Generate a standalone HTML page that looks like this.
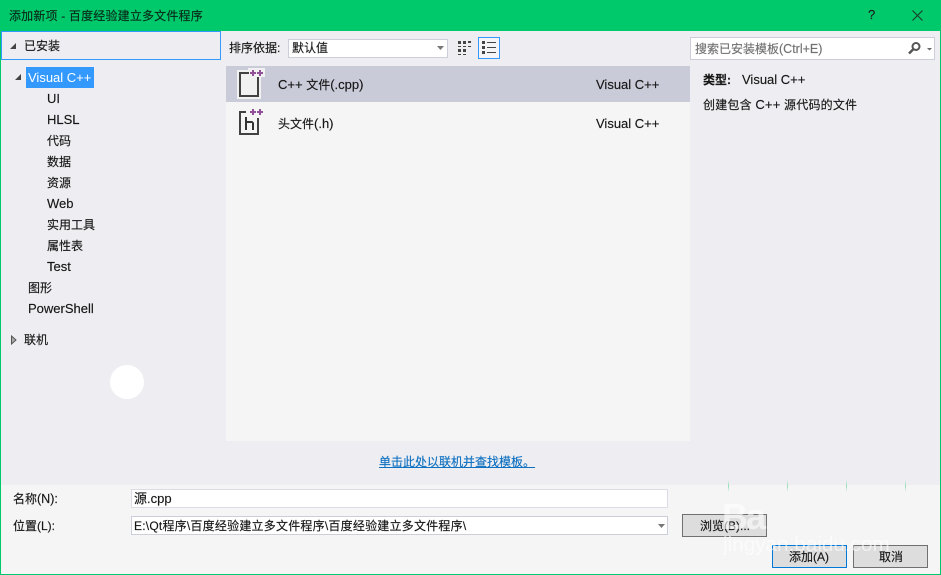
<!DOCTYPE html>
<html><head><meta charset="utf-8"><style>
html,body{margin:0;padding:0}
body{width:941px;height:575px;overflow:hidden;position:relative;background:#eeeef2;font-family:"Liberation Sans","Noto Sans CJK SC",sans-serif;font-size:12px;color:#161616;-webkit-text-stroke:.15px}
.a{position:absolute;box-sizing:border-box}
.t{position:absolute;white-space:nowrap;line-height:16px;height:16px}
.s{font-size:13px}
.k{position:absolute;width:1px;height:12px;top:480px;background:linear-gradient(#fff0,#8fdcb8 50%,#fff0)}
</style></head><body>
<div class="a" style="left:0;top:0;width:941px;height:575px;border:1px solid #00c96b;border-top:0"></div>
<div class="a" style="left:0;top:0;width:941px;height:31px;background:#00c96b"></div>
<div class="t" style="left:9px;top:8px;color:#0a2a1a;letter-spacing:.18px">添加新项 - 百度经验建立多文件程序</div>
<div class="t" style="left:868px;top:7px;color:#1e1e1e;font-size:13px">?</div>
<svg class="a" style="left:911px;top:9px" width="13" height="13"><path d="M1.500 1.500L11.500 11.500M11.500 1.500L1.500 11.500" stroke="#1e3a2a" stroke-width="1.100" fill="none"/></svg>

<div class="a" style="left:1px;top:31px;width:220px;height:29px;border:1px solid #3399ff;background:#eeeef2"></div>
<svg class="a" style="left:9px;top:42px" width="8" height="8"><path d="M7 1V7H1Z" fill="#444"/></svg>
<div class="t" style="left:24px;top:38px">已安装</div>
<svg class="a" style="left:14px;top:73px" width="8" height="8"><path d="M7 1V7H1Z" fill="#444"/></svg>
<div class="a" style="left:26px;top:67px;width:68px;height:21px;background:#3399ff"></div>
<div class="t s" style="left:28px;top:70px;color:#fff;-webkit-text-stroke:0">Visual C++</div>
<div class="t s" style="left:47px;top:91px">UI</div>
<div class="t s" style="left:47px;top:112px">HLSL</div>
<div class="t" style="left:47px;top:133px">代码</div>
<div class="t" style="left:47px;top:154px">数据</div>
<div class="t" style="left:47px;top:175px">资源</div>
<div class="t s" style="left:47px;top:196px">Web</div>
<div class="t" style="left:47px;top:217px">实用工具</div>
<div class="t" style="left:47px;top:238px">属性表</div>
<div class="t s" style="left:47px;top:259px">Test</div>
<div class="t" style="left:28px;top:280px">图形</div>
<div class="t s" style="left:28px;top:301px">PowerShell</div>
<svg class="a" style="left:10px;top:335px" width="8" height="10"><path d="M1.500 1L6 5L1.500 9Z" fill="#aaa" stroke="#555"/></svg>
<div class="t" style="left:24px;top:332px">联机</div>
<div class="a" style="left:110px;top:365px;width:34px;height:34px;border-radius:50%;background:#fff"></div>

<div class="t" style="left:229px;top:40px">排序依据:</div>
<div class="a" style="left:288px;top:39px;width:160px;height:19px;background:#fff;border:1px solid #ccced9"></div>
<div class="t" style="left:292px;top:40px">默认值</div>
<svg class="a" style="left:437px;top:46px" width="8" height="5"><path d="M0 0H7L3.500 4Z" fill="#777"/></svg>
<svg class="a" style="left:458px;top:41px" width="14" height="15" fill="#444"><path d="M0 0h3v3H0zM5 0h3v3H5zM10 0h3v2h-3zM0 5h3v1H0zM5 5h3v1H5zM10 5h3v1h-3zM0 8h3v3H0zM5 8h3v3H5zM0 13h3v1H0zM5 13h3v1H5z"/></svg>
<div class="a" style="left:478px;top:37px;width:22px;height:22px;border:1px solid #3399ff;background:#f5f5f8"></div>
<svg class="a" style="left:482px;top:41px" width="15" height="14" fill="#444"><path d="M0 0h3v3H0zM5 1h9v1H5zM0 5h3v3H0zM5 6h9v1H5zM0 10h3v3H0zM5 11h9v1H5z"/></svg>

<div class="a" style="left:226px;top:66px;width:464px;height:375px;background:#f5f5f5"></div>
<div class="a" style="left:226px;top:66px;width:464px;height:36px;background:#cacbd8"></div>
<svg class="a" style="left:232px;top:66px" width="36" height="36" shape-rendering="crispEdges">
<path d="M5 4H16V2H33V11H29V33H5Z" fill="#f1f1f1"/>
<path d="M7 6H17V8H9V29H25V11H27V31H7Z" fill="#424242"/>
<path d="M18 6h2V4h2v2h2v2h-2v2h-2V8h-2zM25 6h2V4h2v2h2v2h-2v2h-2V8h-2z" fill="#914f98"/>
</svg>
<div class="t" style="left:278px;top:77px"><span class="s">C++ </span>文件<span class="s">(.cpp)</span></div>
<div class="t s" style="left:596px;top:77px">Visual C++</div>
<svg class="a" style="left:232px;top:104px" width="36" height="34" shape-rendering="crispEdges">
<path d="M7 7H14V9H9V29H25V14H27V31H7Z" fill="#424242"/>
<path d="M13 13H15V17H20L22 19V26H20V19H15V26H13Z" fill="#333"/>
<path d="M18 7h2V5h2v2h2v2h-2v2h-2V9h-2zM25 7h2V5h2v2h2v2h-2v2h-2V9h-2z" fill="#914f98"/>
</svg>
<div class="t" style="left:278px;top:116px">头文件<span class="s">(.h)</span></div>
<div class="t s" style="left:596px;top:116px">Visual C++</div>

<div class="a" style="left:690px;top:37px;width:245px;height:23px;background:#fff;border:1px solid #ccced9"></div>
<div class="t" style="left:695px;top:41px;color:#717171">搜索已安装模板<span style="font-size:12.500px">(Ctrl+E)</span></div>
<svg class="a" style="left:907px;top:41px" width="26" height="15"><circle cx="9" cy="5.500" r="3.500" fill="none" stroke="#555" stroke-width="2"/><path d="M6.500 8L2 12.500" stroke="#555" stroke-width="2.500"/><path d="M20 7H25L22.500 9.500Z" fill="#666"/></svg>
<div class="t" style="left:703px;top:72px;font-weight:bold">类型:</div>
<div class="t s" style="left:742px;top:72px">Visual C++</div>
<div class="t" style="left:703px;top:97px;letter-spacing:.2px">创建包含 <span class="s">C++</span> 源代码的文件</div>

<div class="t" style="left:379px;top:454px;color:#0e70c0;text-decoration:underline">单击此处以联机并查找模板。</div>

<div class="a" style="left:1px;top:485px;width:939px;height:89px;background:#f5f5f5"></div>
<div class="k" style="left:728px"></div><div class="k" style="left:787px"></div><div class="k" style="left:846px"></div><div class="k" style="left:905px"></div>
<div class="t" style="left:13px;top:491px">名称<span style="font-size:12.500px">(N):</span></div>
<div class="a" style="left:131px;top:489px;width:537px;height:19px;background:#fff;border:1px solid #dcdce6"></div>
<div class="t" style="left:134px;top:491px;font-size:13px">源.cpp</div>
<div class="t" style="left:13px;top:518px">位置(L):</div>
<div class="a" style="left:131px;top:516px;width:537px;height:19px;background:#fff;border:1px solid #ccced9"></div>
<div class="t" style="left:134px;top:518px;letter-spacing:.22px">E:\Qt程序\百度经验建立多文件程序\百度经验建立多文件程序\</div>
<svg class="a" style="left:658px;top:524px" width="8" height="5"><path d="M0 0H7L3.500 4Z" fill="#777"/></svg>
<div class="a" style="left:682px;top:514px;width:85px;height:23px;background:#dddddd;border:1px solid #707070"></div>
<div class="t" style="left:700px;top:518px">浏览(B)...</div>
<div class="a" style="left:772px;top:545px;width:75px;height:23px;background:#dddddd;border:1px solid #0078d7"></div>
<div class="t" style="left:789px;top:549px">添加(A)</div>
<div class="a" style="left:853px;top:545px;width:75px;height:23px;background:#dddddd;border:1px solid #707070"></div>
<div class="t" style="left:879px;top:549px">取消</div>
<div class="t" style="left:722px;top:499px;font-size:36px;font-weight:bold;color:rgba(255,255,255,.6);line-height:36px;height:36px;-webkit-text-stroke:0;letter-spacing:-2px">Ba</div>
<div class="t" style="left:723px;top:533px;font-size:20.700px;color:rgba(255,255,255,.6);line-height:24px;height:24px;-webkit-text-stroke:0">jingyan.baidu.com</div>
</body></html>
